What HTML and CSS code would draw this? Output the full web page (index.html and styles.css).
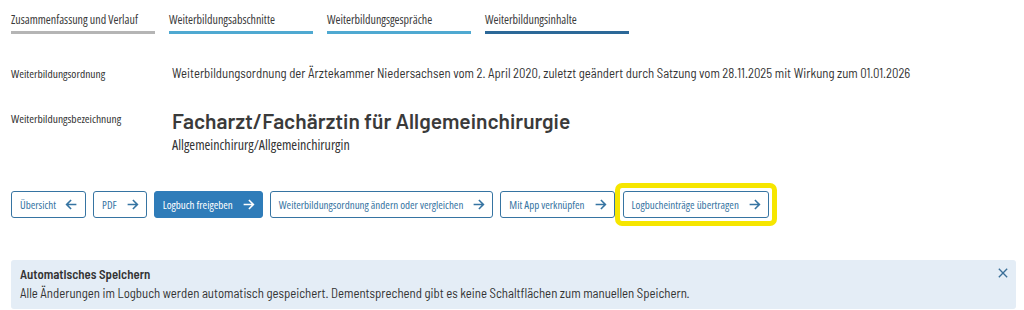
FILE: index.html
```html
<!DOCTYPE html>
<html lang="de">
<head>
  <meta charset="UTF-8">
  <title>Logbuch</title>
  <link rel="stylesheet" href="styles.css">
</head>
<body>
  <nav class="tabs">
    <a class="tab tab-gray">Zusammenfassung und Verlauf</a>
    <a class="tab tab-light">Weiterbildungsabschnitte</a>
    <a class="tab tab-light">Weiterbildungsgespräche</a>
    <a class="tab tab-dark">Weiterbildungsinhalte</a>
  </nav>

  <div class="row row-order">
    <div class="label">Weiterbildungsordnung</div>
    <div class="value">Weiterbildungsordnung der Ärztekammer Niedersachsen vom 2. April 2020, zuletzt geändert durch Satzung vom 28.11.2025 mit Wirkung zum 01.01.2026</div>
  </div>

  <div class="row row-title">
    <div class="label">Weiterbildungsbezeichnung</div>
    <div class="value">
      <h1>Facharzt/Fachärztin für Allgemeinchirurgie</h1>
      <div class="subtitle">Allgemeinchirurg/Allgemeinchirurgin</div>
    </div>
  </div>

  <div class="actions">
    <button class="btn">Übersicht
      <svg viewBox="0 0 16 16"><path d="M14 8H2M7.5 2.5L2 8l5.5 5.5"/></svg>
    </button>
    <button class="btn">PDF
      <svg viewBox="0 0 16 16"><path d="M2 8h12M8.5 2.5L14 8l-5.5 5.5"/></svg>
    </button>
    <button class="btn btn-primary">Logbuch freigeben
      <svg viewBox="0 0 16 16"><path d="M2 8h12M8.5 2.5L14 8l-5.5 5.5"/></svg>
    </button>
    <button class="btn">Weiterbildungsordnung ändern oder vergleichen
      <svg viewBox="0 0 16 16"><path d="M2 8h12M8.5 2.5L14 8l-5.5 5.5"/></svg>
    </button>
    <button class="btn">Mit App verknüpfen
      <svg viewBox="0 0 16 16"><path d="M2 8h12M8.5 2.5L14 8l-5.5 5.5"/></svg>
    </button>
    <span class="marker">
      <button class="btn">Logbucheinträge übertragen
        <svg viewBox="0 0 16 16"><path d="M2 8h12M8.5 2.5L14 8l-5.5 5.5"/></svg>
      </button>
    </span>
  </div>

  <div class="alert">
    <div class="alert-title">Automatisches Speichern</div>
    <div class="alert-text">Alle Änderungen im Logbuch werden automatisch gespeichert. Dementsprechend gibt es keine Schaltflächen zum manuellen Speichern.</div>
    <svg class="close" viewBox="0 0 12 12"><path d="M1 1l10 10M11 1L1 11"/></svg>
  </div>
</body>
</html>
```

FILE: styles.css
```css
body {
  margin: 0;
  padding: 0 8px 0 11px;
  font-family: "Open Sans", sans-serif;
  font-stretch: condensed;
  color: #333;
  background: #fff;
}

.tabs {
  display: flex;
  gap: 14px;
  padding-top: 12px;
}

.tab {
  width: 144px;
  font-size: 12px;
  line-height: 16px;
  padding-bottom: 3px;
  border-bottom: 3px solid #b5b5b5;
  color: #3a3a3a;
  white-space: nowrap;
}

.tab-light {
  border-color: #4fa9d1;
}

.tab-dark {
  border-color: #2c6898;
}

.row {
  display: flex;
}

.row-order {
  margin-top: 31px;
  align-items: baseline;
}

.row-title {
  margin-top: 26px;
}

.label {
  width: 161px;
  flex-shrink: 0;
  font-size: 11.5px;
  color: #333;
}

.row-title .label {
  padding-top: 4px;
}

.value {
  font-family: "Barlow Semi Condensed", Barlow, Roboto, sans-serif;
  font-stretch: semi-condensed;
  font-size: 12.75px;
  color: #333;
}

h1 {
  margin: 0;
  font-family: Barlow, Roboto, sans-serif;
  font-stretch: normal;
  font-size: 21px;
  line-height: 28px;
  font-weight: 600;
  color: #3a3a3a;
}

.subtitle {
  font-family: "Open Sans", sans-serif;
  font-stretch: condensed;
  font-size: 14px;
}

.actions {
  display: flex;
  align-items: center;
  gap: 7px;
  margin-top: 29px;
}

.btn {
  display: flex;
  align-items: center;
  gap: 9px;
  height: 27px;
  padding: 0 7px 0 8px;
  border: 1px solid #3674a2;
  border-radius: 3px;
  background: #fff;
  color: #3674a2;
  font-family: "Open Sans", sans-serif;
  font-stretch: condensed;
  font-size: 11px;
}

.btn svg {
  width: 13px;
  height: 13px;
  fill: none;
  stroke: currentColor;
  stroke-width: 2;
}

.btn-primary {
  background: #2f7cb9;
  border-color: #2f7cb9;
  color: #fff;
}

.marker {
  margin-left: -7px;
  padding: 3px;
  border: 5px solid #f6e600;
  border-radius: 7px;
}

.alert {
  position: relative;
  margin-top: 34px;
  padding: 6px 12px 6px 9px;
  background: #e4edf6;
  border-radius: 3px;
  font-family: "Barlow Semi Condensed", Barlow, Roboto, sans-serif;
  font-stretch: semi-condensed;
  font-size: 12.8px;
  color: #333;
}

.alert-title {
  font-weight: 600;
  line-height: 17px;
}

.alert-text {
  line-height: 20px;
}

.close {
  position: absolute;
  top: 8px;
  right: 8px;
  width: 10px;
  height: 10px;
  fill: none;
  stroke: #3a6f98;
  stroke-width: 1.6;
}
```
